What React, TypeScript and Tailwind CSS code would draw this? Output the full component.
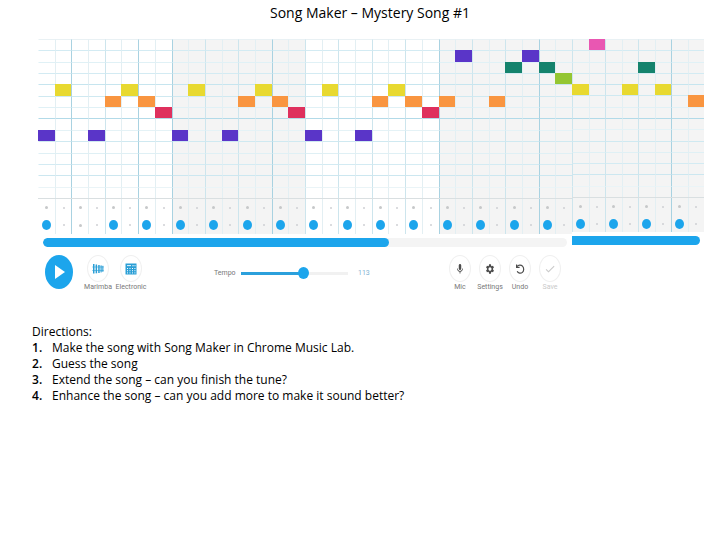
import type { ReactNode } from "react";
import { MdCheck, MdMic, MdSettings } from "react-icons/md";

const PURPLE = "bg-[#5a35c8]";
const YELLOW = "bg-[#e8d930]";
const ORANGE = "bg-[#f99540]";
const RED = "bg-[#df305d]";
const TEAL = "bg-[#15836d]";
const GREEN = "bg-[#94c632]";
const PINK = "bg-[#e957b2]";

// [column, row, colour]
const NOTES: [number, number, string][] = [
  [0, 8, PURPLE], [1, 4, YELLOW], [3, 8, PURPLE], [4, 5, ORANGE],
  [5, 4, YELLOW], [6, 5, ORANGE], [7, 6, RED],
  [8, 8, PURPLE], [9, 4, YELLOW], [11, 8, PURPLE], [12, 5, ORANGE],
  [13, 4, YELLOW], [14, 5, ORANGE], [15, 6, RED],
  [16, 8, PURPLE], [17, 4, YELLOW], [19, 8, PURPLE], [20, 5, ORANGE],
  [21, 4, YELLOW], [22, 5, ORANGE], [23, 6, RED],
  [24, 5, ORANGE], [25, 1, PURPLE], [27, 5, ORANGE], [28, 2, TEAL],
  [29, 1, PURPLE], [30, 2, TEAL], [31, 3, GREEN],
  [32, 4, YELLOW], [33, 0, PINK], [35, 4, YELLOW], [36, 2, TEAL],
  [37, 4, YELLOW], [39, 5, ORANGE],
];

const STRONG_COLUMNS = [2, 6, 8, 14, 24, 30, 38];

const ROW_LINES = [
  "border-t-[#e9f1f4]", "border-t-[#d3ebf3]", "border-t-[#e0f1f6]", "border-t-[#d3ebf3]",
  "border-t-[#c6e5ef]", "border-t-[#cfe9f1]", "border-t-[#e0f1f6]", "border-t-[#b2dae8]",
  "border-t-[#e4f2f6]", "border-t-[#cfe9f1]", "border-t-[#dff0f5]", "border-t-[#d3ebf3]",
  "border-t-[#cce7f0]", "border-t-[#eaf4f7]",
];

const columnLine = (col: number) => {
  if (col === 0) return "border-l-transparent";
  if (STRONG_COLUMNS.includes(col)) return "border-l-[#a9d2e1]";
  return col % 2 === 0 ? "border-l-[#cde5ed]" : "border-l-[#e3eff3]";
};

const shade = (col: number) =>
  (col >= 8 && col < 16) || col >= 24 ? "bg-[#f4f4f4]" : "bg-white";

const range = (from: number, to: number) =>
  Array.from({ length: to - from }, (_, i) => from + i);

type PanelProps = {
  from: number;
  to: number;
  columns: string;
  notesHeight: string;
  drumsHeight: string;
};

const Panel = ({ from, to, columns, notesHeight, drumsHeight }: PanelProps) => (
  <div>
    {/* Melody */}
    <div className={`grid grid-rows-14 ${columns} ${notesHeight}`}>
      {ROW_LINES.map((line, row) =>
        range(from, to).map((col) => {
          const note = NOTES.find(([c, r]) => c === col && r === row);
          return note ? (
            <div key={`${col}-${row}`} className={note[2]} />
          ) : (
            <div
              key={`${col}-${row}`}
              className={`border-t border-l ${line} ${columnLine(col)} ${shade(col)}`}
            />
          );
        })
      )}
    </div>

    {/* Percussion */}
    <div className={`grid border-t border-[#d9dfe1] ${columns} ${drumsHeight}`}>
      {range(from, to).map((col) => (
        <div
          key={col}
          className={`grid grid-rows-2 place-items-center border-l ${columnLine(col)} ${shade(col)}`}
        >
          <Dot big={col % 2 === 0} />
          {col % 2 === 0 && col !== 2 ? (
            <span className="h-[10px] w-[9px] rounded-[50%] bg-[#1ca5ec]" />
          ) : (
            <Dot big={col % 2 === 0} />
          )}
        </div>
      ))}
    </div>
  </div>
);

const Dot = ({ big }: { big: boolean }) => (
  <span
    className={`rounded-full ${big ? "size-[3px] bg-[#c6c8ca]" : "size-[2px] bg-[#cfd1d4]"}`}
  />
);

type ToolProps = { label: string; faded?: boolean; children: ReactNode };

const Tool = ({ label, faded, children }: ToolProps) => (
  <button
    type="button"
    className={`flex w-[30px] flex-col items-center ${
      faded ? "text-[#c9c9c9]" : "text-[#4c4c4c]"
    }`}
  >
    <span className="flex h-[27px] w-[22px] items-center justify-center rounded-[50%] border border-[#f0f0f0]">
      {children}
    </span>
    <span className={`text-[7px] leading-[10px] ${faded ? "" : "text-[#777]"}`}>{label}</span>
  </button>
);

const MarimbaIcon = () => (
  <svg viewBox="0 0 12 12" className="size-3" fill="#2b9fd6">
    <rect x="1" y="1" width="1.5" height="9.5" />
    <rect x="3.6" y="1.5" width="1.5" height="8.8" />
    <rect x="6.2" y="2" width="1.5" height="8" />
    <rect x="8.5" y="2.4" width="1.2" height="7" />
    <rect x="10.3" y="2.8" width="1.1" height="6" />
    <rect x="0.3" y="3.7" width="11.4" height="0.6" />
    <rect x="0.3" y="7.4" width="11.4" height="0.6" />
  </svg>
);

const ElectronicIcon = () => (
  <svg viewBox="0 0 12 12" className="size-3">
    <rect x="0.5" y="0.5" width="11" height="11" fill="#2b9fd6" />
    <g fill="#fff">
      <rect x="2" y="2.2" width="4" height="0.9" />
      <rect x="7.5" y="2" width="1" height="1.3" />
      <rect x="9.6" y="2" width="0.8" height="1.3" />
      <rect x="2" y="5" width="1" height="1" />
      <rect x="4.5" y="5" width="1" height="1" />
      <rect x="7" y="5" width="1" height="1" />
      <rect x="9.4" y="5" width="1" height="1" />
      <rect x="2" y="7.2" width="1" height="1" />
      <rect x="4.5" y="7.2" width="1" height="1" />
      <rect x="7" y="7.2" width="1" height="1" />
      <rect x="9.4" y="7.2" width="1" height="1" />
      <rect x="2" y="9.4" width="1" height="1" />
      <rect x="4.5" y="9.4" width="1" height="1" />
      <rect x="7" y="9.4" width="1" height="1" />
      <rect x="9.4" y="9.4" width="1" height="1" />
    </g>
  </svg>
);

const UndoIcon = () => (
  <svg
    viewBox="0 0 10 12"
    className="h-3 w-[10px]"
    fill="none"
    stroke="currentColor"
    strokeWidth="1.2"
  >
    <path d="M2 3.6C3.4 1.8 6 1.6 7.5 3.2 9.2 5 9 8 7.4 9.4 5.8 10.8 3.2 10.4 2.2 8.2" />
    <path d="M1.6 1.4V4.4H4.6" />
  </svg>
);

const DIRECTIONS = [
  "Make the song with Song Maker in Chrome Music Lab.",
  "Guess the song",
  "Extend the song – can you finish the tune?",
  "Enhance the song – can you add more to make it sound better?",
];

const App = () => {
  return (
    <main className="min-h-screen bg-white font-['Open_Sans',sans-serif] text-black">
      <h1 className="pt-1 pl-5 text-center text-[14px] leading-[18px]">
        Song Maker – Mystery Song #1
      </h1>

      <section className="mt-[17px] mr-4 ml-[38px]">
        {/* The last two bars sit in a second, slightly shorter panel */}
        <div className="flex items-start">
          <div className="min-w-0 flex-[89]">
            <Panel
              from={0}
              to={32}
              columns="grid-cols-32"
              notesHeight="h-[159px]"
              drumsHeight="h-[36px]"
            />
            <div className="mt-1 mr-[5px] ml-[5px] h-[9px] overflow-hidden rounded-full bg-[#f4f4f4]">
              <div className="h-full w-[66%] rounded-full bg-[#1ca5ec]" />
            </div>
          </div>
          <div className="min-w-0 flex-[22]">
            <Panel
              from={32}
              to={40}
              columns="grid-cols-8"
              notesHeight="h-[158px]"
              drumsHeight="h-[35px]"
            />
            <div className="mt-1 mr-1 h-[9px] rounded-r-full bg-[#1ca5ec]" />
          </div>
        </div>

        {/* Controls */}
        <div className="mt-2 flex items-start pl-[7px] font-['Roboto',sans-serif]">
          <button
            type="button"
            aria-label="Play"
            className="flex h-[34px] w-[28px] items-center justify-center rounded-[50%] bg-[#1ca5ec]"
          >
            <svg viewBox="0 0 10 14" className="ml-[2px] h-[14px] w-[10px]" fill="#fff">
              <path d="M0 0 10 7 0 14z" />
            </svg>
          </button>

          <div className="ml-[10px] flex gap-[3px]">
            <Tool label="Marimba"><MarimbaIcon /></Tool>
            <Tool label="Electronic"><ElectronicIcon /></Tool>
          </div>

          <div className="mt-3 ml-[68px] flex items-center text-[7px] leading-3 text-[#777]">
            <label htmlFor="tempo" className="w-[27px]">Tempo</label>
            <input
              id="tempo"
              type="range"
              min={20}
              max={180}
              defaultValue={115}
              className="h-3 w-[107px] appearance-none bg-[linear-gradient(to_right,#2ba0dc_58%,#f1f1f1_58%)] bg-[length:100%_3px] bg-center bg-no-repeat [&::-webkit-slider-thumb]:h-3 [&::-webkit-slider-thumb]:w-[11px] [&::-webkit-slider-thumb]:appearance-none [&::-webkit-slider-thumb]:rounded-[50%] [&::-webkit-slider-thumb]:bg-[#1ca5ec]"
            />
            <output htmlFor="tempo" className="ml-[10px] w-3 text-[#7fb3d3]">113</output>
          </div>

          <div className="ml-[75px] flex">
            <Tool label="Mic"><MdMic className="h-3 w-[10px]" preserveAspectRatio="none" /></Tool>
            <Tool label="Settings"><MdSettings className="h-3 w-[10px]" preserveAspectRatio="none" /></Tool>
            <Tool label="Undo"><UndoIcon /></Tool>
            <Tool label="Save" faded><MdCheck className="size-3" /></Tool>
          </div>
        </div>
      </section>

      <section className="mt-8 pl-8 text-[12px] leading-[16px]">
        <p>Directions:</p>
        <ol>
          {DIRECTIONS.map((text, i) => (
            <li key={text} className="flex">
              <span className="w-5 font-semibold">{i + 1}.</span>
              {text}
            </li>
          ))}
        </ol>
      </section>
    </main>
  );
};

export default App;
